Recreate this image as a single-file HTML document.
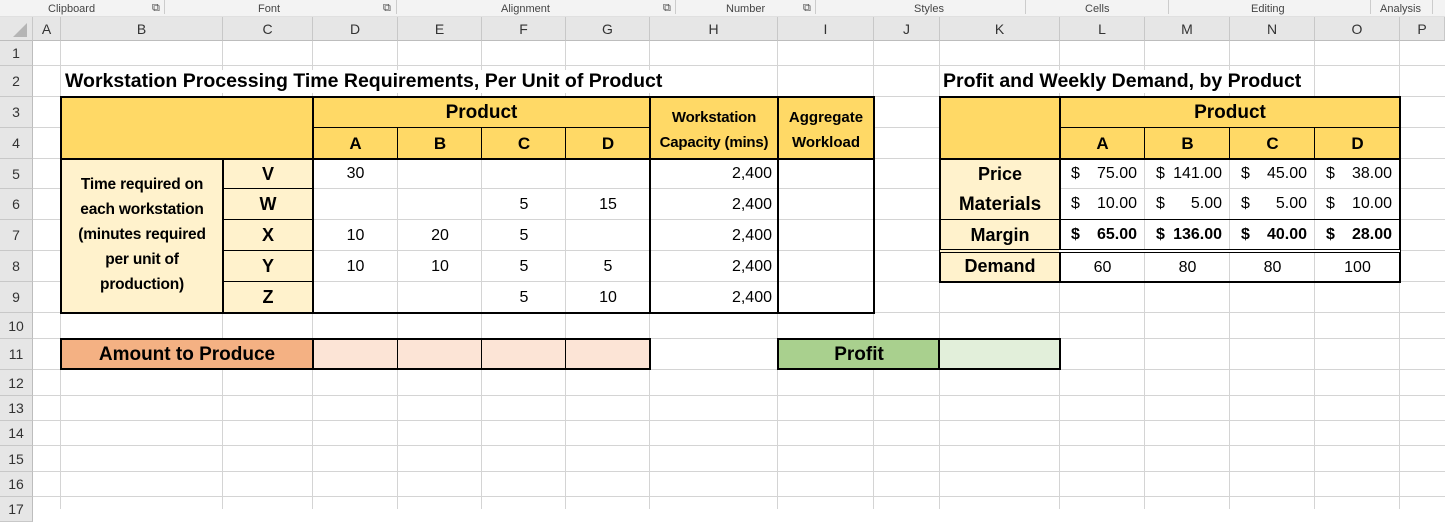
<!DOCTYPE html>
<html><head><meta charset="utf-8"><style>
*{margin:0;padding:0;box-sizing:border-box}
body{width:1445px;height:509px;overflow:hidden;background:#fff;position:relative;font-family:"Liberation Sans",sans-serif;color:#000}
div{position:absolute}
.vl{width:1px;background:#d4d4d4;top:41px;height:468px}
.hl{height:1px;background:#d4d4d4;left:33px;width:1412px}
.t{display:flex;align-items:center;justify-content:center;white-space:nowrap}
.b{font-weight:bold}
.ch{top:17px;height:24px;background:#e6e6e6;color:#333;font-size:14px;display:flex;align-items:center;justify-content:center;border-right:1px solid #c8c8c8;border-bottom:1px solid #bdbdbd}
.rh{left:0;width:33px;background:#e6e6e6;color:#333;font-size:14px;display:flex;align-items:center;justify-content:center;border-bottom:1px solid #c8c8c8;border-right:1px solid #bdbdbd}
.rb{top:0;height:17px;font-size:11px;color:#444;display:flex;align-items:center}
.K{background:#000}
.n{font-size:16px}
.h{font-size:17px;font-weight:bold}
.L{font-size:18px;font-weight:bold}
</style></head><body>
<!-- ribbon -->
<div style="left:0;top:0;width:1445px;height:17px;background:#f3f3f3;border-bottom:1px solid #e0e0e0"></div>
<div class="rb" style="left:48px">Clipboard</div><div class="rb" style="left:152px">⧉</div>
<div class="rb" style="left:258px">Font</div><div class="rb" style="left:383px">⧉</div>
<div class="rb" style="left:501px">Alignment</div><div class="rb" style="left:663px">⧉</div>
<div class="rb" style="left:726px">Number</div><div class="rb" style="left:803px">⧉</div>
<div class="rb" style="left:914px">Styles</div>
<div class="rb" style="left:1085px">Cells</div>
<div class="rb" style="left:1251px">Editing</div>
<div class="rb" style="left:1380px">Analysis</div>
<div style="left:164px;top:0;width:1px;height:14px;background:#ccc"></div>
<div style="left:396px;top:0;width:1px;height:14px;background:#ccc"></div>
<div style="left:675px;top:0;width:1px;height:14px;background:#ccc"></div>
<div style="left:815px;top:0;width:1px;height:14px;background:#ccc"></div>
<div style="left:1025px;top:0;width:1px;height:14px;background:#ccc"></div>
<div style="left:1168px;top:0;width:1px;height:14px;background:#ccc"></div>
<div style="left:1370px;top:0;width:1px;height:14px;background:#ccc"></div>
<div style="left:1432px;top:0;width:1px;height:14px;background:#ccc"></div>
<!-- column headers -->
<div class="ch" style="left:0;width:33px"><div style="left:13px;top:6px;width:0;height:0;border-left:14px solid transparent;border-bottom:14px solid #b5b5b5;position:absolute"></div></div>
<div class="ch" style="left:33px;width:28px">A</div>
<div class="ch" style="left:61px;width:162px">B</div>
<div class="ch" style="left:223px;width:90px">C</div>
<div class="ch" style="left:313px;width:85px">D</div>
<div class="ch" style="left:398px;width:84px">E</div>
<div class="ch" style="left:482px;width:84px">F</div>
<div class="ch" style="left:566px;width:84px">G</div>
<div class="ch" style="left:650px;width:128px">H</div>
<div class="ch" style="left:778px;width:96px">I</div>
<div class="ch" style="left:874px;width:66px">J</div>
<div class="ch" style="left:940px;width:120px">K</div>
<div class="ch" style="left:1060px;width:85px">L</div>
<div class="ch" style="left:1145px;width:85px">M</div>
<div class="ch" style="left:1230px;width:85px">N</div>
<div class="ch" style="left:1315px;width:85px">O</div>
<div class="ch" style="left:1400px;width:45px">P</div>
<!-- row headers -->
<div class="rh" style="top:41px;height:25px">1</div>
<div class="rh" style="top:66px;height:31px">2</div>
<div class="rh" style="top:97px;height:31px">3</div>
<div class="rh" style="top:128px;height:31px">4</div>
<div class="rh" style="top:159px;height:30px">5</div>
<div class="rh" style="top:189px;height:31px">6</div>
<div class="rh" style="top:220px;height:31px">7</div>
<div class="rh" style="top:251px;height:31px">8</div>
<div class="rh" style="top:282px;height:31px">9</div>
<div class="rh" style="top:313px;height:26px">10</div>
<div class="rh" style="top:339px;height:31px">11</div>
<div class="rh" style="top:370px;height:26px">12</div>
<div class="rh" style="top:396px;height:25px">13</div>
<div class="rh" style="top:421px;height:25px">14</div>
<div class="rh" style="top:446px;height:26px">15</div>
<div class="rh" style="top:472px;height:25px">16</div>
<div class="rh" style="top:497px;height:25px">17</div>
<!-- gridlines -->
<div class="vl" style="left:60px"></div><div class="vl" style="left:222px"></div><div class="vl" style="left:312px"></div>
<div class="vl" style="left:397px"></div><div class="vl" style="left:481px"></div><div class="vl" style="left:565px"></div>
<div class="vl" style="left:649px"></div><div class="vl" style="left:777px"></div><div class="vl" style="left:873px"></div>
<div class="vl" style="left:939px"></div><div class="vl" style="left:1059px"></div><div class="vl" style="left:1144px"></div>
<div class="vl" style="left:1229px"></div><div class="vl" style="left:1314px"></div><div class="vl" style="left:1399px"></div>
<div class="hl" style="top:65px"></div><div class="hl" style="top:96px"></div><div class="hl" style="top:127px"></div>
<div class="hl" style="top:158px"></div><div class="hl" style="top:188px"></div><div class="hl" style="top:219px"></div>
<div class="hl" style="top:250px"></div><div class="hl" style="top:281px"></div><div class="hl" style="top:312px"></div>
<div class="hl" style="top:338px"></div><div class="hl" style="top:369px"></div><div class="hl" style="top:395px"></div>
<div class="hl" style="top:420px"></div><div class="hl" style="top:445px"></div><div class="hl" style="top:471px"></div>
<div class="hl" style="top:496px"></div>
<div class="b" style="left:65px;top:70px;font-size:19.5px;background:#fff;padding-right:4px;white-space:nowrap">Workstation Processing Time Requirements, Per Unit of Product</div>
<div class="b" style="left:943px;top:70px;font-size:19.5px;background:#fff;padding-right:4px;white-space:nowrap">Profit and Weekly Demand, by Product</div>

<!-- TABLE 1 fills -->
<div style="left:61px;top:97px;width:813px;height:62px;background:#ffd966"></div>
<div style="left:61px;top:159px;width:252px;height:154px;background:#fff2cc"></div>
<div class="t L" style="left:313px;top:97px;width:337px;height:31px;font-size:19px">Product</div>
<div class="t h" style="left:313px;top:128px;width:85px;height:31px">A</div>
<div class="t h" style="left:398px;top:128px;width:84px;height:31px">B</div>
<div class="t h" style="left:482px;top:128px;width:84px;height:31px">C</div>
<div class="t h" style="left:566px;top:128px;width:84px;height:31px">D</div>
<div class="t b" style="left:650px;top:97px;width:128px;height:62px;font-size:15px;flex-direction:column;line-height:25px;padding-top:4px;letter-spacing:-0.2px"><span>Workstation</span><span>Capacity (mins)</span></div>
<div class="t b" style="left:778px;top:97px;width:96px;height:62px;font-size:15px;flex-direction:column;line-height:25px;padding-top:4px"><span>Aggregate</span><span>Workload</span></div>
<div class="t b" style="left:61px;top:159px;width:162px;height:154px;font-size:15.5px;flex-direction:column;line-height:25px;padding-bottom:4px;letter-spacing:-0.2px"><span>Time required on</span><span>each workstation</span><span>(minutes required</span><span>per unit of</span><span>production)</span></div>
<div class="t L" style="left:223px;top:159px;width:90px;height:30px">V</div>
<div class="t L" style="left:223px;top:189px;width:90px;height:31px">W</div>
<div class="t L" style="left:223px;top:220px;width:90px;height:31px">X</div>
<div class="t L" style="left:223px;top:251px;width:90px;height:31px">Y</div>
<div class="t L" style="left:223px;top:282px;width:90px;height:31px">Z</div>
<!-- data -->
<div class="t n" style="left:313px;top:159px;width:85px;height:30px">30</div>
<div class="t n" style="left:482px;top:189px;width:84px;height:31px">5</div>
<div class="t n" style="left:566px;top:189px;width:84px;height:31px">15</div>
<div class="t n" style="left:313px;top:220px;width:85px;height:31px">10</div>
<div class="t n" style="left:398px;top:220px;width:84px;height:31px">20</div>
<div class="t n" style="left:482px;top:220px;width:84px;height:31px">5</div>
<div class="t n" style="left:313px;top:251px;width:85px;height:31px">10</div>
<div class="t n" style="left:398px;top:251px;width:84px;height:31px">10</div>
<div class="t n" style="left:482px;top:251px;width:84px;height:31px">5</div>
<div class="t n" style="left:566px;top:251px;width:84px;height:31px">5</div>
<div class="t n" style="left:482px;top:282px;width:84px;height:31px">5</div>
<div class="t n" style="left:566px;top:282px;width:84px;height:31px">10</div>
<div class="t n" style="left:650px;top:159px;width:122px;height:30px;justify-content:flex-end">2,400</div>
<div class="t n" style="left:650px;top:189px;width:122px;height:31px;justify-content:flex-end">2,400</div>
<div class="t n" style="left:650px;top:220px;width:122px;height:31px;justify-content:flex-end">2,400</div>
<div class="t n" style="left:650px;top:251px;width:122px;height:31px;justify-content:flex-end">2,400</div>
<div class="t n" style="left:650px;top:282px;width:122px;height:31px;justify-content:flex-end">2,400</div>
<!-- table 1 borders -->
<div class="K" style="left:60px;top:96px;width:815px;height:2px"></div>
<div class="K" style="left:60px;top:312px;width:815px;height:2px"></div>
<div class="K" style="left:60px;top:158px;width:815px;height:2px"></div>
<div class="K" style="left:60px;top:96px;width:2px;height:218px"></div>
<div class="K" style="left:873px;top:96px;width:2px;height:218px"></div>
<div class="K" style="left:312px;top:96px;width:2px;height:218px"></div>
<div class="K" style="left:649px;top:96px;width:2px;height:218px"></div>
<div class="K" style="left:777px;top:96px;width:2px;height:218px"></div>
<div class="K" style="left:222px;top:158px;width:2px;height:156px"></div>
<div class="K" style="left:313px;top:127px;width:337px;height:1px"></div>
<div class="K" style="left:397px;top:128px;width:1px;height:31px"></div>
<div class="K" style="left:481px;top:128px;width:1px;height:31px"></div>
<div class="K" style="left:565px;top:128px;width:1px;height:31px"></div>
<div class="K" style="left:223px;top:188px;width:90px;height:1px"></div>
<div class="K" style="left:223px;top:219px;width:90px;height:1px"></div>
<div class="K" style="left:223px;top:250px;width:90px;height:1px"></div>
<div class="K" style="left:223px;top:281px;width:90px;height:1px"></div>

<!-- row 11 -->
<div class="t L" style="left:61px;top:339px;width:252px;height:31px;background:#f4b183;font-size:19px">Amount to Produce</div>
<div style="left:313px;top:339px;width:337px;height:31px;background:#fce4d6"></div>
<div class="K" style="left:60px;top:338px;width:591px;height:2px"></div>
<div class="K" style="left:60px;top:368px;width:591px;height:2px"></div>
<div class="K" style="left:60px;top:338px;width:2px;height:32px"></div>
<div class="K" style="left:312px;top:338px;width:2px;height:32px"></div>
<div class="K" style="left:649px;top:338px;width:2px;height:32px"></div>
<div class="K" style="left:397px;top:339px;width:1px;height:31px"></div>
<div class="K" style="left:481px;top:339px;width:1px;height:31px"></div>
<div class="K" style="left:565px;top:339px;width:1px;height:31px"></div>
<div class="t L" style="left:778px;top:339px;width:162px;height:31px;background:#a9d08e;font-size:19px">Profit</div>
<div style="left:940px;top:339px;width:120px;height:31px;background:#e2efda"></div>
<div class="K" style="left:777px;top:338px;width:284px;height:2px"></div>
<div class="K" style="left:777px;top:368px;width:284px;height:2px"></div>
<div class="K" style="left:777px;top:338px;width:2px;height:32px"></div>
<div class="K" style="left:938px;top:338px;width:2px;height:32px"></div>
<div class="K" style="left:1059px;top:338px;width:2px;height:32px"></div>

<!-- TABLE 2 -->
<div style="left:940px;top:97px;width:460px;height:62px;background:#ffd966"></div>
<div style="left:940px;top:159px;width:120px;height:123px;background:#fff2cc"></div>
<div class="t L" style="left:1060px;top:97px;width:340px;height:31px;font-size:19px">Product</div>
<div class="t h" style="left:1060px;top:128px;width:85px;height:31px">A</div>
<div class="t h" style="left:1145px;top:128px;width:85px;height:31px">B</div>
<div class="t h" style="left:1230px;top:128px;width:85px;height:31px">C</div>
<div class="t h" style="left:1315px;top:128px;width:85px;height:31px">D</div>
<div class="t L" style="left:940px;top:159px;width:120px;height:30px">Price</div>
<div class="t L" style="left:940px;top:189px;width:120px;height:31px;font-size:19px">Materials</div>
<div class="t L" style="left:940px;top:220px;width:120px;height:31px">Margin</div>
<div class="t L" style="left:940px;top:251px;width:120px;height:31px">Demand</div>
<!-- money -->
<div class="n" style="left:1071px;top:165px">$</div><div class="n" style="left:1085px;top:165px;width:52px;text-align:right">75.00</div>
<div class="n" style="left:1156px;top:165px">$</div><div class="n" style="left:1160px;top:165px;width:62px;text-align:right">141.00</div>
<div class="n" style="left:1241px;top:165px">$</div><div class="n" style="left:1255px;top:165px;width:52px;text-align:right">45.00</div>
<div class="n" style="left:1326px;top:165px">$</div><div class="n" style="left:1340px;top:165px;width:52px;text-align:right">38.00</div>
<div class="n" style="left:1071px;top:195px">$</div><div class="n" style="left:1085px;top:195px;width:52px;text-align:right">10.00</div>
<div class="n" style="left:1156px;top:195px">$</div><div class="n" style="left:1170px;top:195px;width:52px;text-align:right">5.00</div>
<div class="n" style="left:1241px;top:195px">$</div><div class="n" style="left:1255px;top:195px;width:52px;text-align:right">5.00</div>
<div class="n" style="left:1326px;top:195px">$</div><div class="n" style="left:1340px;top:195px;width:52px;text-align:right">10.00</div>
<div class="n b" style="left:1071px;top:226px">$</div><div class="n b" style="left:1083px;top:226px;width:54px;text-align:right">65.00</div>
<div class="n b" style="left:1156px;top:226px">$</div><div class="n b" style="left:1160px;top:226px;width:62px;text-align:right">136.00</div>
<div class="n b" style="left:1241px;top:226px">$</div><div class="n b" style="left:1253px;top:226px;width:54px;text-align:right">40.00</div>
<div class="n b" style="left:1326px;top:226px">$</div><div class="n b" style="left:1338px;top:226px;width:54px;text-align:right">28.00</div>
<div class="t n" style="left:1060px;top:252px;width:85px;height:31px">60</div>
<div class="t n" style="left:1145px;top:252px;width:85px;height:31px">80</div>
<div class="t n" style="left:1230px;top:252px;width:85px;height:31px">80</div>
<div class="t n" style="left:1315px;top:252px;width:85px;height:31px">100</div>
<!-- table 2 borders -->
<div class="K" style="left:939px;top:96px;width:462px;height:2px"></div>
<div class="K" style="left:939px;top:281px;width:462px;height:2px"></div>
<div class="K" style="left:939px;top:158px;width:462px;height:2px"></div>
<div class="K" style="left:939px;top:96px;width:2px;height:187px"></div>
<div class="K" style="left:1399px;top:96px;width:2px;height:187px"></div>
<div class="K" style="left:1059px;top:96px;width:2px;height:187px"></div>
<div class="K" style="left:1060px;top:127px;width:340px;height:1px"></div>
<div class="K" style="left:1144px;top:128px;width:1px;height:31px"></div>
<div class="K" style="left:1229px;top:128px;width:1px;height:31px"></div>
<div class="K" style="left:1314px;top:128px;width:1px;height:31px"></div>
<div class="K" style="left:940px;top:219px;width:460px;height:1px"></div>
<div class="K" style="left:940px;top:249px;width:460px;height:1px"></div>
<div class="K" style="left:940px;top:252px;width:460px;height:1px"></div>
<div style="left:940px;top:250px;width:460px;height:2px;background:#fff"></div>
<div style="left:940px;top:250px;width:119px;height:2px;background:#fff2cc"></div>
</body></html>
